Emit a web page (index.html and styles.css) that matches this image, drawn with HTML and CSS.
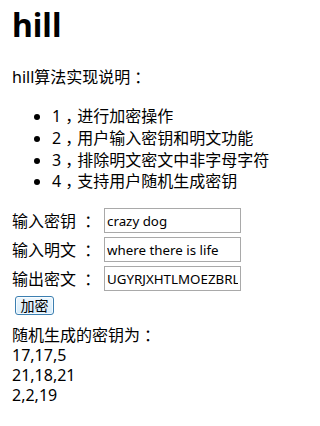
FILE: index.html
```html
<!DOCTYPE html>
<html lang="zh-CN">
<head>
<meta charset="utf-8">
<title>hill</title>
<link rel="stylesheet" href="styles.css">
</head>
<body>
<div class="page">
  <h1 class="title">hill</h1>
  <p class="intro">hill算法实现说明<span class="fw">：</span></p>
  <ul class="features">
    <li>1<span class="fw">，</span>进行加密操作</li>
    <li>2<span class="fw">，</span>用户输入密钥和明文功能</li>
    <li>3<span class="fw">，</span>排除明文密文中非字母字符</li>
    <li>4<span class="fw">，</span>支持用户随机生成密钥</li>
  </ul>
  <form class="cipher-form">
    <div class="row"><label class="label">输入密钥 <span class="fw">：</span></label><input class="field" type="text" value="crazy dog"></div>
    <div class="row"><label class="label">输入明文 <span class="fw">：</span></label><input class="field" type="text" value="where there is life"></div>
    <div class="row"><label class="label">输出密文 <span class="fw">：</span></label><input class="field" type="text" value="UGYRJXHTLMOEZBRL"></div>
    <button class="btn" type="button">加密</button>
  </form>
  <div class="result">
    <div>随机生成的密钥为<span class="fw">：</span></div>
    <div>17,17,5</div>
    <div>21,18,21</div>
    <div>2,2,19</div>
  </div>
</div>
</body>
</html>
```
FILE: styles.css
```css
html, body {
  margin: 0;
  padding: 0;
  background: #fff;
}
body {
  font-family: "Noto Sans", "Noto Sans CJK SC", sans-serif;
  font-size: 16px;
  color: #000;
}
.page {
  padding: 0 12px;
}
.fw {
  display: inline-block;
  width: 1em;
  text-align: center;
  font-family: "Noto Sans CJK SC", sans-serif;
  font-feature-settings: "halt";
}
.title {
  font-size: 32px;
  font-weight: bold;
  line-height: 40px;
  margin: 5px 0 21px;
}
.intro {
  margin: 0;
  line-height: 21px;
}
.features {
  margin: 17px 0 16px;
  padding-left: 40px;
  line-height: 20.75px;
}
.cipher-form {
  display: flex;
  flex-direction: column;
  align-items: flex-start;
  gap: 4px;
  margin: 0;
}
.row {
  display: flex;
  align-items: center;
}
.label {
  width: 92px;
  line-height: 21px;
}
.field {
  box-sizing: border-box;
  width: 137px;
  height: 25px;
  margin: 0;
  padding: 0 2px;
  border: 1px solid #a9a9a9;
  border-radius: 0;
  background: #fff;
  color: #000;
  font-family: "Noto Sans", "Noto Sans CJK SC", sans-serif;
  font-size: 13.33px;
  outline: none;
}
.btn {
  box-sizing: border-box;
  width: 39px;
  height: 19px;
  margin: 1px 0 0 3px;
  padding: 0;
  border: 1px solid #3c7fb1;
  border-radius: 3px;
  background: linear-gradient(#eef7fd, #d6ecfb);
  box-shadow: inset 0 0 0 1px rgba(255, 255, 255, 0.7);
  color: #000;
  font-family: "Noto Sans CJK SC", sans-serif;
  font-size: 14px;
  line-height: 17px;
}
.result {
  margin-top: 9px;
  line-height: 20px;
}
```
